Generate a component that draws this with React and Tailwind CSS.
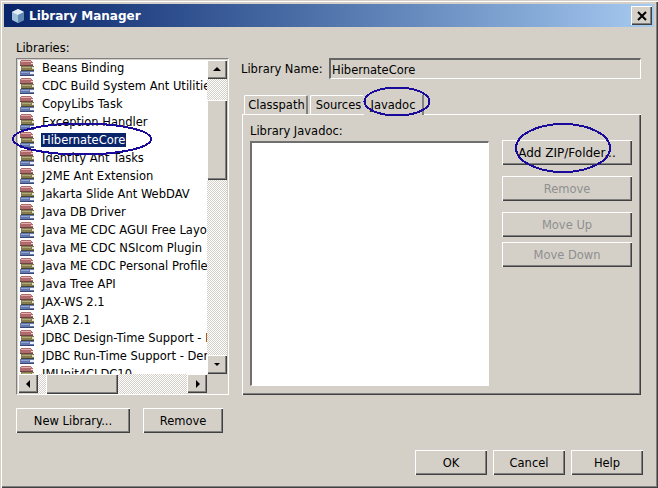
import React from "react";

const libraries = [
  "Beans Binding",
  "CDC Build System Ant Utilities",
  "CopyLibs Task",
  "Exception Handler",
  "HibernateCore",
  "Identity Ant Tasks",
  "J2ME Ant Extension",
  "Jakarta Slide Ant WebDAV",
  "Java DB Driver",
  "Java ME CDC AGUI Free Layout",
  "Java ME CDC NSIcom Plugin 1",
  "Java ME CDC Personal Profile",
  "Java Tree API",
  "JAX-WS 2.1",
  "JAXB 2.1",
  "JDBC Design-Time Support - Derby",
  "JDBC Run-Time Support - Derby",
  "JMUnit4CLDC10",
];

const raised = "shadow-[inset_1px_1px_0_#ffffff,inset_-1px_-1px_0_#404040,inset_-2px_-2px_0_#808080]";
const dither = "bg-[image:repeating-conic-gradient(#d4d0c8_0_25%,#ffffff_0_50%)] bg-[length:2px_2px]";

function BookIcon() {
  return (
    <svg width="16" height="16" viewBox="0 0 16 16" className="shrink-0" shapeRendering="crispEdges">
      {/* top book */}
      <path d="M2 0h10v1h1v1h1v3H1V1h1z" fill="#b06a6a" />
      <path d="M2 1h10v1H2z" fill="#dcb0b0" />
      <path d="M12 3h2v1h-2z" fill="#f0e0e0" />
      <path d="M1 5h13v1H1z" fill="#6a4444" />
      {/* middle book */}
      <path d="M2 6h13v4H2z" fill="#857d50" />
      <path d="M3 7h9v1H3z" fill="#b0aa78" />
      <path d="M13 7h2v2h-2z" fill="#e6e6cc" />
      <path d="M2 10h13v1H2z" fill="#4a4730" />
      {/* bottom book */}
      <path d="M1 11h14v4H1z" fill="#6478b0" />
      <path d="M2 12h8v1H2z" fill="#92a4d4" />
      <path d="M11 12h4v2h-4z" fill="#eef1fa" />
      <path d="M1 15h14v1H1z" fill="#3a4772" />
    </svg>
  );
}

function Arrow({ dir }) {
  const points = {
    up: "4,9 8,5 12,9",
    down: "5,6 11,6 8,9",
    left: "10,4 10,12 6,8",
    right: "7,4 7,12 11,8",
  };
  return (
    <svg width="16" height="16" viewBox="0 0 16 16">
      <polygon points={points[dir]} fill="#000000" />
    </svg>
  );
}

function ScrollButton({ dir }) {
  return (
    <div className={`w-5 h-[19px] shrink-0 flex items-center justify-center bg-[#d4d0c8] ${raised}`}>
      <Arrow dir={dir} />
    </div>
  );
}

function Button({ label, className = "", disabled }) {
  return (
    <div
      className={`h-[25px] flex items-center justify-center bg-[#d4d0c8] ${raised} ${
        disabled ? "text-[#8f8f8f]" : "text-black"
      } ${className}`}
    >
      {label}
    </div>
  );
}

export default function App() {
  return (
    <div className="relative w-[658px] h-[488px] flex flex-col overflow-hidden bg-[#d4d0c8] text-[11.5px] leading-[14px] text-black font-['DejaVu_Sans',sans-serif] shadow-[inset_1px_1px_0_#d4d0c8,inset_2px_2px_0_#ffffff,inset_-1px_-1px_0_#404040,inset_-2px_-2px_0_#808080]">
      <div className="mx-1 mt-1 h-[23px] shrink-0 flex items-center pl-[6px] pr-[2px] bg-gradient-to-r from-[#0a246a] to-[#a6caf0]">
        <svg width="16" height="16" viewBox="0 0 16 16" className="shrink-0">
          <path d="M8 1l6 3v8l-6 3-6-3V4z" fill="#9fc0dc" />
          <path d="M8 1l6 3-6 3-6-3z" fill="#e4eef6" />
          <path d="M8 7l6-3v8l-6 3z" fill="#5e8ab0" />
        </svg>
        <span className="ml-[3px] text-white font-bold text-[12px]">Library Manager</span>
        <div className={`ml-auto w-[21px] h-[19px] flex items-center justify-center bg-[#d4d0c8] ${raised}`}>
          <svg width="10" height="10" viewBox="0 0 10 10">
            <path d="M1 1l8 8M9 1l-8 8" stroke="#000000" strokeWidth="2" />
          </svg>
        </div>
      </div>

      <div className="flex pl-4 shrink-0">
        <div className="w-[213px] shrink-0">
          <div className="mt-[14px] mb-[3px] h-[14px]">Libraries:</div>
          <div className="h-[337px] flex flex-col border border-[#808080] border-r-white border-b-white border-t-[#808080] p-px pb-0">
            <div className="flex flex-1 min-h-0">
              <div className="flex-1 min-w-0 overflow-hidden bg-white">
                {libraries.map((name) => (
                  <div key={name} className="h-[18px] flex items-center pl-px whitespace-nowrap -translate-y-px">
                    <BookIcon />
                    <span
                      className={`ml-[6px] px-px ${
                        name === "HibernateCore" ? "bg-[#0a246a] text-white" : ""
                      }`}
                    >
                      {name}
                    </span>
                  </div>
                ))}
              </div>
              <div className="w-5 shrink-0 flex flex-col">
                <ScrollButton dir="up" />
                <div className={`h-[21px] ${dither}`} />
                <div className={`h-[80px] bg-[#d4d0c8] ${raised}`} />
                <div className={`flex-1 ${dither}`} />
                <ScrollButton dir="down" />
              </div>
            </div>
            <div className="h-[20px] shrink-0 flex">
              <ScrollButton dir="left" />
              <div className={`w-[8px] ${dither}`} />
              <div className={`w-[72px] bg-[#d4d0c8] ${raised}`} />
              <div className={`flex-1 ${dither}`} />
              <ScrollButton dir="right" />
              <div className="w-5 bg-[#d4d0c8]" />
            </div>
          </div>
          <div className="mt-[13px] flex gap-[13px]">
            <Button label="New Library..." className="w-[114px]" />
            <Button label="Remove" className="w-[80px]" />
          </div>
        </div>

        <div className="ml-3 mt-[31px] w-[400px] shrink-0">
          <div className="flex items-center h-[21px]">
            <span className="w-[88px]">Library Name:</span>
            <div className="flex-1 h-[21px] flex items-center pl-px pt-px border-2 border-[#666666] border-r-white border-b-white border-r border-b">
              HibernateCore
            </div>
          </div>
          <div className="mt-4 ml-[3px] flex h-[19px] items-end">
            <div className="h-[19px] w-[64px] flex items-center justify-center pl-[2px] rounded-t-[2px] border-t border-l border-white border-r-2 border-r-[#808080]">
              Classpath
            </div>
            <div className="h-[19px] w-[54px] ml-[2px] flex items-center justify-center pl-[2px] rounded-t-[2px] border-t border-l border-white">
              Sources
            </div>
            <div className="h-[20px] w-[60px] flex items-center justify-center relative z-10 -mb-px bg-[#d4d0c8] border-r-2 border-r-[#808080]">
              Javadoc
            </div>
          </div>
          <div className={`ml-px h-[281px] flex pl-2 ${raised}`}>
            <div className="w-[239px] shrink-0">
              <div className="mt-[10px] mb-[3px] h-[14px]">Library Javadoc:</div>
              <div className="h-[245px] bg-white border-t-2 border-l-2 border-[#707070] border-r border-b border-r-[#ffffff] border-b-[#ffffff]" />
            </div>
            <div className="ml-[13px] mt-[26px] w-[130px] flex flex-col">
              <Button label="Add ZIP/Folder..." className="text-[12px]" />
              <Button label="Remove" disabled className="mt-[11px]" />
              <Button label="Move Up" disabled className="mt-[11px]" />
              <Button label="Move Down" disabled className="mt-[5px]" />
            </div>
          </div>
        </div>
      </div>

      <div className="mt-[17px] pr-[15px] flex justify-end gap-[6px]">
        <Button
          label="OK"
          className="w-[72px] shadow-[inset_0_0_0_1px_#404040,inset_2px_2px_0_#ffffff,inset_-2px_-2px_0_#808080]"
        />
        <Button label="Cancel" className="w-[72px]" />
        <Button label="Help" className="w-[72px]" />
      </div>

      {/* hand drawn circles on top of the dialog */}
      <svg width="658" height="488" className="absolute left-0 top-0 pointer-events-none z-20" shapeRendering="crispEdges">
        <g fill="none" stroke="#1a0a9c" strokeWidth="2">
          <ellipse cx="82" cy="139" rx="69" ry="15.500" />
          <ellipse cx="397" cy="101.500" rx="32.500" ry="14" />
          <ellipse cx="563" cy="148" rx="47" ry="24" />
        </g>
      </svg>
    </div>
  );
}
